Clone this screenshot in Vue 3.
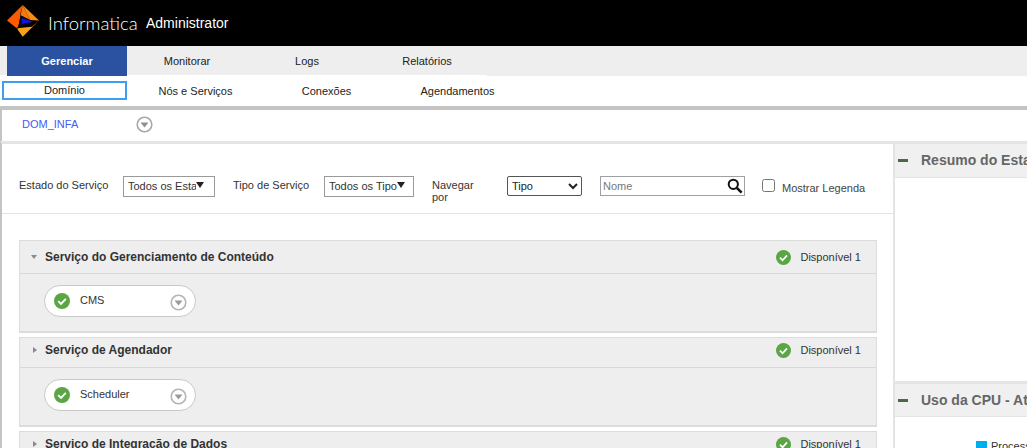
<script setup>
const tabs = ['Gerenciar', 'Monitorar', 'Logs', 'Relatórios']
const subs = ['Domínio', 'Nós e Serviços', 'Conexões', 'Agendamentos']
const groups = [
  { name: 'Serviço do Gerenciamento de Conteúdo', open: true, item: 'CMS' },
  { name: 'Serviço de Agendador', open: false, item: 'Scheduler' },
  { name: 'Serviço de Integração de Dados', open: false, item: '' }
]
</script>

<template>
  <div class="page">
    <header class="top">
      <svg class="logo" width="32" height="32" viewBox="0 0 32 32">
        <polygon points="15.7,0 0,15.6 9.7,23.3 11.3,21.7" fill="#ff5a00" />
        <polygon points="15.7,0 32,15.6 23,15" fill="#f98a12" />
        <polygon points="15.7,0 23,15 13,10" fill="#ef7a10" />
        <polygon points="9.7,23.3 25,21.7 32,15.6 15.7,31.7" fill="#f9a11b" />
        <polygon points="15.7,0 13,10 26.3,16.7 9.7,24 11.3,21.7" fill="#0a0a0a" />
        <polygon points="14.7,13.3 26.3,16.7 14.7,19" fill="#1212ee" />
      </svg>
      <span class="brand">Informatica</span>
      <span class="admin">Administrator</span>
    </header>

    <nav class="tabs">
      <a v-for="(t, i) in tabs" :key="t" class="tab" :class="{ active: i === 0 }">{{ t }}</a>
    </nav>
    <nav class="subs">
      <a v-for="(s, i) in subs" :key="s" class="sub" :class="{ active: i === 0 }">{{ s }}</a>
    </nav>

    <div class="crumb">
      <a class="dom">DOM_INFA</a>
      <svg class="menu" width="17" height="17" viewBox="0 0 17 17">
        <circle cx="8.5" cy="8.5" r="7.3" fill="#fff" stroke="#a8a8a8" stroke-width="1.6" />
        <polygon points="4.5,6.5 12.5,6.5 8.5,11.5" fill="#8f8f8f" />
      </svg>
    </div>

    <div class="workspace">
      <main class="main">
        <div class="filters">
          <label class="lbl l1">Estado do Serviço</label>
          <div class="fake w1"><span>Todos os Esta</span><i class="caret"></i></div>
          <label class="lbl l2">Tipo de Serviço</label>
          <div class="fake w2"><span>Todos os Tipo</span><i class="caret"></i></div>
          <label class="lbl l3"><span>Navegar por</span></label>
          <select class="sel"><option>Tipo</option></select>
          <div class="search">
            <input placeholder="Nome" />
            <svg width="16" height="16" viewBox="0 0 16 16">
              <circle cx="6.3" cy="6.3" r="4.6" fill="none" stroke="#111" stroke-width="2" />
              <line x1="9.8" y1="9.8" x2="14.6" y2="14.6" stroke="#111" stroke-width="2.6" />
            </svg>
          </div>
          <label class="legend"><input type="checkbox" /><span>Mostrar Legenda</span></label>
        </div>

        <div class="list">
          <section v-for="g in groups" :key="g.name" class="group">
            <div class="ghead">
              <i :class="g.open ? 'tri-down' : 'tri-right'"></i>
              <span class="gname">{{ g.name }}</span>
              <svg class="ok" width="15" height="15" viewBox="0 0 16 16">
                <circle cx="8" cy="8" r="8" fill="#5ba545" />
                <path d="M4.2 8.2 7 11l4.8-5.2" fill="none" stroke="#fff" stroke-width="1.9" />
              </svg>
              <span class="avail">Disponível 1</span>
            </div>
            <div v-if="g.item" class="gbody">
              <div class="pill">
                <svg width="16" height="16" viewBox="0 0 16 16">
                  <circle cx="8" cy="8" r="8" fill="#5ba545" />
                  <path d="M4.2 8.2 7 11l4.8-5.2" fill="none" stroke="#fff" stroke-width="1.9" />
                </svg>
                <span class="pname">{{ g.item }}</span>
                <svg class="pmenu" width="17" height="17" viewBox="0 0 17 17">
                  <circle cx="8.5" cy="8.5" r="7.3" fill="#fff" stroke="#b4b4b4" stroke-width="1.6" />
                  <polygon points="4.5,6.5 12.5,6.5 8.5,11.5" fill="#9a9a9a" />
                </svg>
              </div>
            </div>
          </section>
        </div>
      </main>

      <aside class="side">
        <div class="shead"><i class="dash"></i><span>Resumo do Estado</span></div>
        <div class="sbody one"></div>
        <div class="shead two"><i class="dash"></i><span>Uso da CPU - Atividade</span></div>
        <div class="sbody chart"><i class="sq"></i><span>Processos</span></div>
      </aside>
    </div>
  </div>
</template>

<style>
html, body { margin: 0; padding: 0; background: #fff; overflow: hidden; }
</style>

<style scoped>
.page {
  width: 1027px;
  height: 448px;
  overflow: hidden;
  font-family: "Liberation Sans", Arial, sans-serif;
  font-size: 11px;
  color: #333;
  background: #fff;
}
.top {
  height: 46px;
  background: #000;
  display: flex;
  align-items: center;
  padding-left: 7px;
  box-sizing: border-box;
  color: #fff;
}
.logo { flex: none; margin-top: -5px; }
.brand {
  font-family: Lato, sans-serif;
  font-weight: 300;
  font-size: 18.5px;
  margin-left: 9px;
  width: 98px;
  color: #fff;
}
.admin { font-size: 14px; }

.tabs {
  height: 30px;
  background: linear-gradient(#fff, #fff) 0 100% / 487px 1px no-repeat, #eee;
  display: flex;
  padding-left: 7px;
}
.tab {
  width: 120px;
  text-align: center;
  line-height: 30px;
  color: #222;
}
.tab.active { background: #2a52a0; color: #fff; font-weight: bold; }

.subs {
  height: 30px;
  display: flex;
  padding-left: 2px;
  padding-top: 5px;
  box-sizing: border-box;
}
.sub {
  width: 131px;
  height: 19px;
  line-height: 21px;
  text-align: center;
  color: #222;
  box-sizing: border-box;
}
.sub.active {
  width: 125px;
  border: 2px solid #3d9df0;
  line-height: 14px;
  margin-right: 3px;
}

.crumb {
  height: 35px;
  border-top: 4px solid #c4c4c4;
  border-left: 2px solid #c4c4c4;
  display: flex;
  align-items: center;
  padding-left: 20px;
  padding-bottom: 4px;
  box-sizing: border-box;
}
.dom { color: #3f5df0; width: 114px; }
.menu { flex: none; margin-top: 1px; }

.workspace {
  display: flex;
  border-top: 3px solid #e4e4e4;
  border-left: 2px solid #c4c4c4;
  height: 304px;
}
.main { width: 891px; flex: none; border-right: 2px solid #e4e4e4; }
.filters {
  height: 70px;
  border-bottom: 1px solid #e4e4e4;
  display: flex;
  align-items: center;
  padding-left: 17px;
  padding-top: 14px;
  box-sizing: border-box;
}
.lbl { line-height: 12px; margin-top: -1px; }
.l1 { width: 104px; }
.l2 { width: 91px; }
.l3 { width: 75px; margin-top: 11px; }
.l3 span { display: block; width: 50px; }
.fake {
  height: 21px;
  border: 1px solid #9a9a9a;
  box-sizing: border-box;
  display: flex;
  padding: 3px 0 0 4px;
  margin-top: 1px;
  overflow: hidden;
}
.w1 { width: 92px; margin-right: 18px; }
.w2 { width: 90px; margin-right: 18px; }
.caret {
  width: 0;
  height: 0;
  border-left: 4px solid transparent;
  border-right: 4px solid transparent;
  border-top: 6px solid #222;
  margin-top: 2px;
  flex: none;
}
.fake span { white-space: nowrap; overflow: hidden; width: 67.5px; flex: none; }
.sel {
  width: 75px;
  height: 20px;
  margin: 0 18px 0 0;
  font: inherit;
  color: #222;
  background: #fff;
  padding-left: 0;
  border: 1px solid #555;
  border-radius: 2px;
}
.search {
  width: 145px;
  height: 20px;
  border: 1px solid #a0a0a0;
  box-sizing: border-box;
  display: flex;
  align-items: center;
  padding-right: 1px;
}
.search input {
  border: 0;
  outline: 0;
  flex: 1;
  min-width: 0;
  padding: 0 0 0 2px;
  font: inherit;
  background: transparent;
}
.search input::placeholder { color: #777; }
.legend {
  display: flex;
  align-items: center;
  margin-left: 17px;
  color: #444;
}
.legend input { margin: 0 7px 0 0; width: 13px; height: 13px; }
.legend span { padding-top: 5px; }

.list { padding: 26px 16px 0 17px; }
.group {
  background: #eee;
  border: 1px solid #dcdcdc;
  border-bottom-width: 2px;
  margin-bottom: 4px;
  box-sizing: border-box;
}
.ghead {
  height: 32px;
  display: flex;
  align-items: center;
  border-bottom: 1px solid #d8d8d8;
  padding-left: 11px;
  padding-right: 15px;
}
.group + .group .ghead { height: 24px; padding-bottom: 5px; }
.gname { font-weight: bold; font-size: 12px; color: #333; flex: 1; margin-left: 8px; }
.tri-down {
  width: 0; height: 0;
  border-left: 3.5px solid transparent;
  border-right: 3.5px solid transparent;
  border-top: 4px solid #8a8a8a;
}
.tri-right {
  width: 0; height: 0;
  border-top: 3.5px solid transparent;
  border-bottom: 3.5px solid transparent;
  border-left: 4px solid #8a8a8a;
  margin-left: 2px;
}
.ok { margin-right: 9px; flex: none; }
.avail { color: #333; }
.gbody { height: 57px; padding: 11px 0 0 24px; box-sizing: border-box; }
.pill {
  width: 152px;
  height: 32px;
  box-sizing: border-box;
  background: #fff;
  border: 1px solid #c8c8c8;
  border-radius: 16px;
  display: flex;
  align-items: center;
  padding: 0 8px 0 9px;
}
.pname { flex: 1; margin-left: 10px; margin-top: -2px; color: #333; }
.pmenu { flex: none; margin-top: 2px; }

.side { flex: 1; min-width: 0; overflow: hidden; white-space: nowrap; }
.shead {
  height: 34px;
  background: #f0f0f0;
  border-bottom: 1px solid #e4e4e4;
  display: flex;
  align-items: center;
  padding-left: 3px;
  padding-bottom: 1px;
  box-sizing: border-box;
  font-weight: bold;
  font-size: 14px;
  color: #666;
}
.shead.two { height: 36px; border-top: 3px solid #e4e4e4; padding-bottom: 0; }
.dash { width: 10px; height: 3px; background: #4a6b45; margin-right: 13px; flex: none; }
.sbody.one { height: 203px; }
.sbody.chart { padding: 23px 0 0 81px; display: flex; align-items: center; color: #333; }
.sq { width: 11px; height: 11px; background: #00aeef; margin-right: 4px; flex: none; }
</style>
